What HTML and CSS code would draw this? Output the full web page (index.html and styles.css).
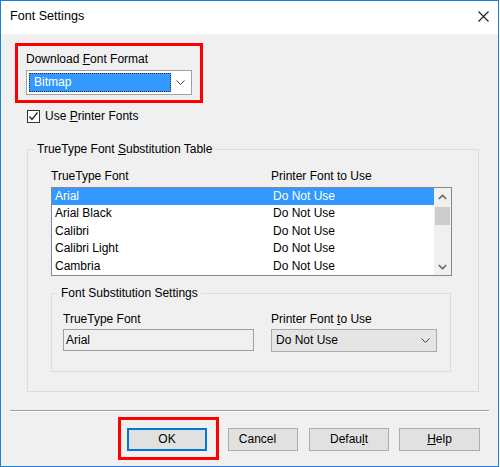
FILE: index.html
```html
<!DOCTYPE html>
<html lang="en">
<head>
    <meta charset="UTF-8">
    <title>Font Settings</title>
    <link rel="stylesheet" href="styles.css">
</head>
<body>
    <div class="window">
        <div class="titlebar">
            <span class="title">Font Settings</span>
            <svg class="close" width="11" height="11" viewBox="0 0 11 11">
                <path d="M0.5 0.5 L10.5 10.5 M10.5 0.5 L0.5 10.5" stroke="#1a1a1a" stroke-width="1.1" fill="none"/>
            </svg>
        </div>

        <div class="content">
            <div class="label">Download <u>F</u>ont Format</div>
            <div class="select">
                <span class="select-value">Bitmap</span>
                <svg class="chevron" width="9" height="5" viewBox="0 0 9 5">
                    <polyline points="0.5,0.5 4.5,4.5 8.5,0.5" stroke="#404040" fill="none"/>
                </svg>
            </div>

            <label class="check">
                <span class="check-box">
                    <svg width="11" height="11" viewBox="0 0 11 11">
                        <polyline points="1.5,5.5 4,8.5 9.5,1.5" stroke="#222" stroke-width="1.3" fill="none"/>
                    </svg>
                </span>
                <span>Use <u>P</u>rinter Fonts</span>
            </label>

            <fieldset class="group table-group">
                <legend>TrueType Font <u>S</u>ubstitution Table</legend>
                <div class="table-body">
                    <div class="columns">
                        <span>TrueType Font</span>
                        <span>Printer Font to Use</span>
                    </div>
                    <div class="listbox">
                        <div class="rows">
                            <div class="row selected"><span>Arial</span><span>Do Not Use</span></div>
                            <div class="row"><span>Arial Black</span><span>Do Not Use</span></div>
                            <div class="row"><span>Calibri</span><span>Do Not Use</span></div>
                            <div class="row"><span>Calibri Light</span><span>Do Not Use</span></div>
                            <div class="row"><span>Cambria</span><span>Do Not Use</span></div>
                        </div>
                        <div class="scrollbar">
                            <div class="scroll-btn">
                                <svg width="9" height="6" viewBox="0 0 9 6">
                                    <polyline points="0.8,5 4.5,1.3 8.2,5" stroke="#606060" stroke-width="1.6" fill="none"/>
                                </svg>
                            </div>
                            <div class="thumb"></div>
                            <div class="track"></div>
                            <div class="scroll-btn">
                                <svg width="9" height="6" viewBox="0 0 9 6">
                                    <polyline points="0.8,1 4.5,4.7 8.2,1" stroke="#606060" stroke-width="1.6" fill="none"/>
                                </svg>
                            </div>
                        </div>
                    </div>

                    <fieldset class="group settings-group">
                        <legend>Font Substitution Settings</legend>
                        <div class="fields">
                            <div class="field">
                                <div class="field-label">TrueType Font</div>
                                <div class="textbox">Arial</div>
                            </div>
                            <div class="field">
                                <div class="field-label">Printer Font <u>t</u>o Use</div>
                                <div class="combo">
                                    <span>Do Not Use</span>
                                    <svg class="chevron" width="9" height="5" viewBox="0 0 9 5">
                                        <polyline points="0.5,0.5 4.5,4.5 8.5,0.5" stroke="#404040" fill="none"/>
                                    </svg>
                                </div>
                            </div>
                        </div>
                    </fieldset>
                </div>
            </fieldset>
        </div>

        <div class="separator"></div>

        <div class="buttons">
            <button class="btn btn-ok">OK</button>
            <button class="btn btn-cancel">Cancel</button>
            <button class="btn btn-default">Defau<u>l</u>t</button>
            <button class="btn btn-help"><u>H</u>elp</button>
        </div>

        <!-- red callouts -->
        <div class="callout callout-format"></div>
        <div class="callout callout-ok"></div>
    </div>
</body>
</html>
```

FILE: styles.css
```css
body {
    margin: 0;
    font-family: "Liberation Sans", Arial, sans-serif;
    font-size: 12px;
    line-height: 15px;
    color: #000;
}

u {
    text-underline-offset: 1px;
}

.window {
    position: relative;
    width: 499px;
    height: 467px;
    box-sizing: border-box;
    border: 1px solid #1a80d8;
    background: #f0f0f0;
    display: flex;
    flex-direction: column;
}

.titlebar {
    height: 33px;
    flex: none;
    background: #fff;
    display: flex;
    justify-content: space-between;
    align-items: flex-start;
    padding: 0 9px 0 9px;
}

.title {
    margin-top: 8px;
    font-size: 12.6px;
}

.close {
    margin-top: 10px;
}

.content {
    padding: 18px 0 0 25px;
}

.select {
    margin-top: 3px;
    width: 166px;
    height: 25px;
    box-sizing: border-box;
    border: 1px solid #a0a0a0;
    background: #fff;
    display: flex;
    align-items: center;
    padding: 0 6px 0 2px;
}

.select-value {
    flex: 1;
    height: 19px;
    line-height: 19px;
    box-sizing: border-box;
    background: #3399ff;
    color: #fff;
    padding-left: 5px;
    outline: 1px dotted #333;
    outline-offset: -1px;
    margin-right: 5px;
}

.check {
    margin-top: 14px;
    display: flex;
    align-items: center;
    height: 15px;
    margin-left: 1px;
}

.check-box {
    width: 13px;
    height: 13px;
    box-sizing: border-box;
    border: 1px solid #333;
    background: #fff;
    margin-right: 5px;
    display: flex;
}

.group {
    margin: 0;
    padding: 0;
    border: 1px solid #dcdcdc;
    min-width: 0;
}

.group legend {
    padding: 0 3px;
    margin-left: 6px;
}

.table-group {
    margin: 18px 0 0 1px;
    width: 452px;
    box-sizing: border-box;
}

.table-body {
    padding: 12px 0 19px 23px;
}

.columns {
    display: grid;
    grid-template-columns: 220px 1fr;
}

.listbox {
    margin-top: 3px;
    width: 401px;
    height: 89px;
    box-sizing: border-box;
    border: 1px solid #828790;
    background: #fff;
    display: flex;
}

.rows {
    flex: 1;
}

.row {
    display: grid;
    grid-template-columns: 218px 1fr;
    height: 17.4px;
    line-height: 17.4px;
    padding-left: 3px;
}

.row.selected {
    background: #3399ff;
    color: #fff;
}

.scrollbar {
    width: 17px;
    background: #f0f0f0;
    display: flex;
    flex-direction: column;
}

.scroll-btn {
    height: 17px;
    display: flex;
    align-items: center;
    justify-content: center;
}

.thumb {
    margin: 2px 1px 0 1px;
    height: 18px;
    background: #cdcdcd;
}

.track {
    flex: 1;
}

.settings-group {
    margin-top: 10px;
    width: 400px;
    box-sizing: border-box;
}

.fields {
    display: flex;
    padding: 11px 0 19px 11px;
}

.field-label {
    margin-bottom: 2px;
}

.textbox {
    width: 191px;
    height: 22px;
    box-sizing: border-box;
    border: 1px solid #a0a0a0;
    padding-left: 2px;
    line-height: 20px;
    margin-right: 17px;
}

.combo {
    width: 166px;
    height: 23px;
    box-sizing: border-box;
    border: 1px solid #adadad;
    background: #e5e5e5;
    display: flex;
    align-items: center;
    justify-content: space-between;
    padding: 0 6px 0 4px;
}

.separator {
    margin: 18px 9px 0 9px;
    border-top: 1px solid #a0a0a0;
    border-bottom: 1px solid #fff;
}

.buttons {
    margin-top: 16px;
    padding-left: 126px;
    display: flex;
}

.btn {
    height: 23px;
    box-sizing: border-box;
    border: 1px solid #adadad;
    background: #e1e1e1;
    font: inherit;
    color: #000;
    padding: 0;
    margin-right: 10px;
}

.btn-ok {
    width: 80px;
    border-color: #0078d7;
    box-shadow: inset 0 0 0 1px #0078d7;
    margin-right: 21px;
}

.btn-cancel {
    width: 70px;
    padding-right: 11px;
    margin-right: 11px;
}

.btn-default {
    width: 80px;
}

.btn-help {
    width: 81px;
}

.callout {
    position: absolute;
    border: 3px solid #ff0000;
    box-sizing: border-box;
}

.callout-format {
    left: 14px;
    top: 42px;
    width: 188px;
    height: 60px;
}

.callout-ok {
    left: 117px;
    top: 416px;
    width: 101px;
    height: 43px;
}
```
